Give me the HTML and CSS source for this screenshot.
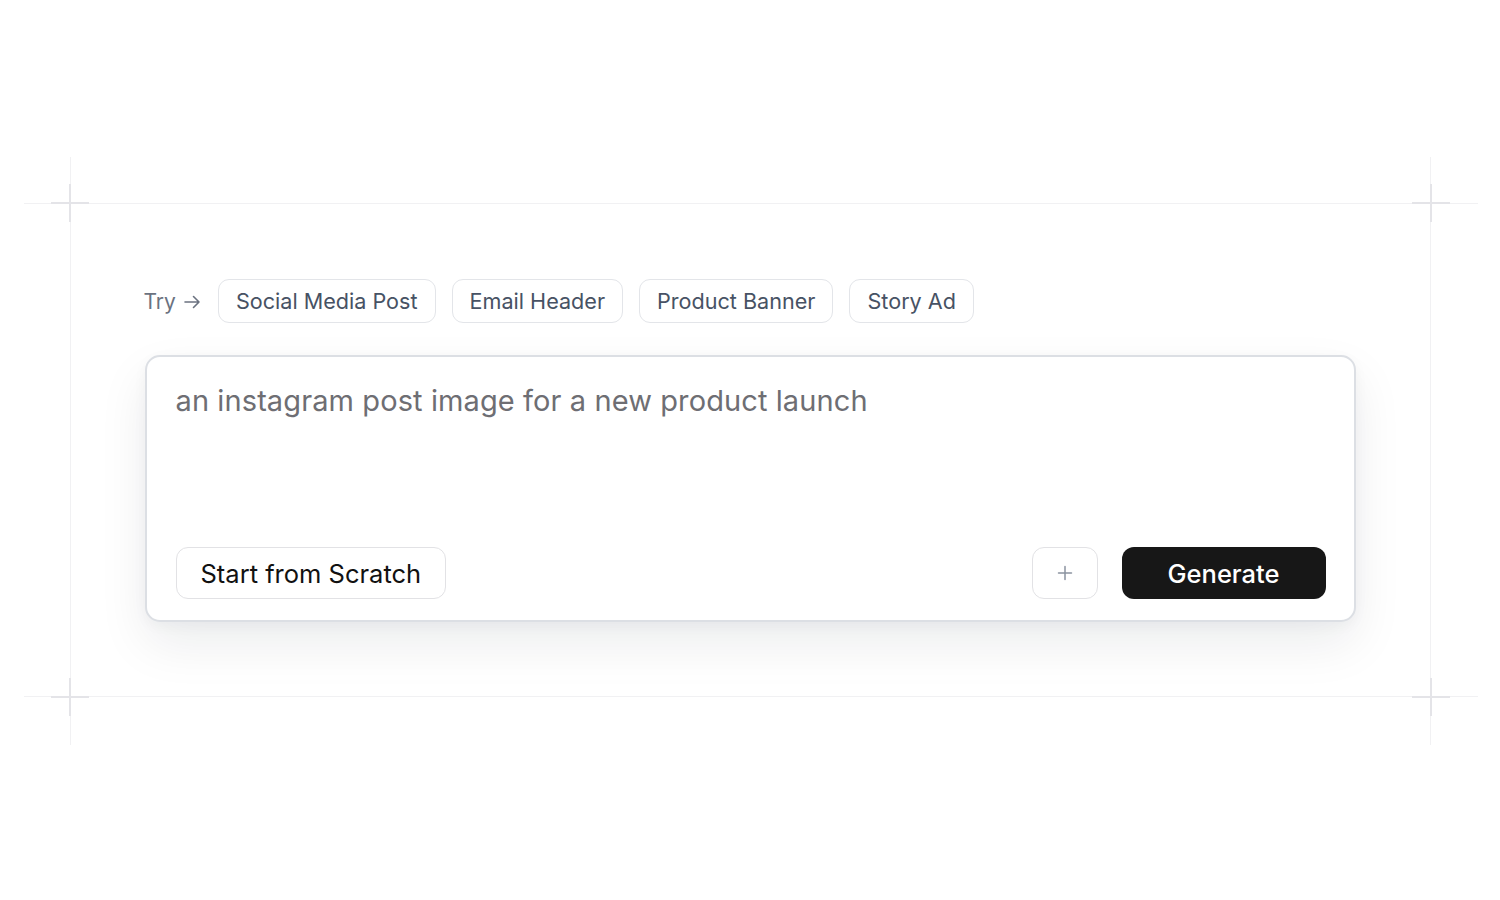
FILE: index.html
```html
<!DOCTYPE html>
<html lang="en">
<head>
	<meta charset="UTF-8">
	<title>Generate</title>
	<link rel="stylesheet" href="styles.css">
</head>
<body>
	<div class="page">
		<div class="frame">
			<span class="line line-top"></span>
			<span class="line line-bottom"></span>
			<span class="line line-left"></span>
			<span class="line line-right"></span>
			<span class="cross cross-tl"></span>
			<span class="cross cross-tr"></span>
			<span class="cross cross-bl"></span>
			<span class="cross cross-br"></span>

			<div class="try-row">
				<span class="try-label">Try
					<svg class="arrow" width="20" height="20" viewBox="0 0 20 20" fill="none" stroke="currentColor" stroke-width="1.6" stroke-linecap="round" stroke-linejoin="round"><path d="M3 10h14M11.5 4.5l5.5 5.5-5.5 5.5"/></svg>
				</span>
				<button class="chip">Social Media Post</button>
				<button class="chip">Email Header</button>
				<button class="chip">Product Banner</button>
				<button class="chip">Story Ad</button>
			</div>

			<div class="card">
				<div class="prompt">an instagram post image for a new product launch</div>
				<div class="actions">
					<button class="btn btn-light">Start from Scratch</button>
					<div class="actions-right">
						<button class="btn btn-plus">
							<svg width="16" height="16" viewBox="0 0 16 16" fill="none" stroke="currentColor" stroke-width="1.5" stroke-linecap="round"><path d="M8 1.5v13M1.5 8h13"/></svg>
						</button>
						<button class="btn btn-dark">Generate</button>
					</div>
				</div>
			</div>
		</div>
	</div>
</body>
</html>
```

FILE: styles.css
```css
*{box-sizing: border-box;}
body{margin: 0; background: #fff; font-family: Inter, "Noto Sans", "Liberation Sans", sans-serif;}
button{font-family: inherit; cursor: pointer; background: #fff;}

.page{height: 900px; display: flex; align-items: center; justify-content: center;}
.frame{position: relative; width: 1361px; padding: 76px 75px 75px 75px;}

/* guide lines round the frame */
.line{position: absolute; background: #f1f1f3;}
.line-top, .line-bottom{left: -46px; right: -47px; height: 1px;}
.line-top{top: 0;}
.line-bottom{bottom: 0;}
.line-left, .line-right{top: -46px; bottom: -48px; width: 1px;}
.line-left{left: 0;}
.line-right{right: 0;}

.cross{position: absolute; width: 38px; height: 38px;}
.cross:before, .cross:after{content: ''; position: absolute; background: #e4e4e8;}
.cross:before{left: 0; top: 18px; width: 38px; height: 2px;}
.cross:after{left: 18px; top: 0; width: 2px; height: 38px;}
.cross-tl{left: -19px; top: -19px;}
.cross-tr{right: -19px; top: -19px;}
.cross-bl{left: -19px; bottom: -19px;}
.cross-br{right: -19px; bottom: -19px;}

.try-row{display: flex; align-items: center; gap: 16px; margin-left: -1px;}
.try-label{display: flex; align-items: center; gap: 6px; font-size: 21px; color: #6b7280;}
.arrow{margin-top: 1px;}
.chip{height: 44px; padding: 0 17px; border: 1.5px solid #e3e5e9; border-radius: 11px; font-size: 21.6px; color: #475264;}

.card{margin-top: 32px; height: 267px; border: 2px solid #dcdfe4; border-radius: 15px; background: #fff;
	box-shadow: 0 22px 50px rgba(15, 23, 42, 0.08), 0 4px 14px rgba(15, 23, 42, 0.04);
	padding: 23px 28px 21px 29px; display: flex; flex-direction: column; justify-content: space-between;}
.prompt{font-size: 29px; line-height: 42px; color: #6e6e73; letter-spacing: 0.1px;}

.actions{display: flex; align-items: center; justify-content: space-between;}
.actions-right{display: flex; align-items: center; gap: 24px;}
.btn{height: 52px; border-radius: 12px; font-size: 25.5px;}
.btn-light{padding: 0 24px; border: 1.5px solid #e2e2e5; color: #111;}
.btn-plus{width: 66px; border: 1.5px solid #e2e2e5; color: #8b93a0; display: flex; align-items: center; justify-content: center;}
.btn-dark{width: 204px; border: none; background: #171717; color: #fff; font-weight: 500;}
```
